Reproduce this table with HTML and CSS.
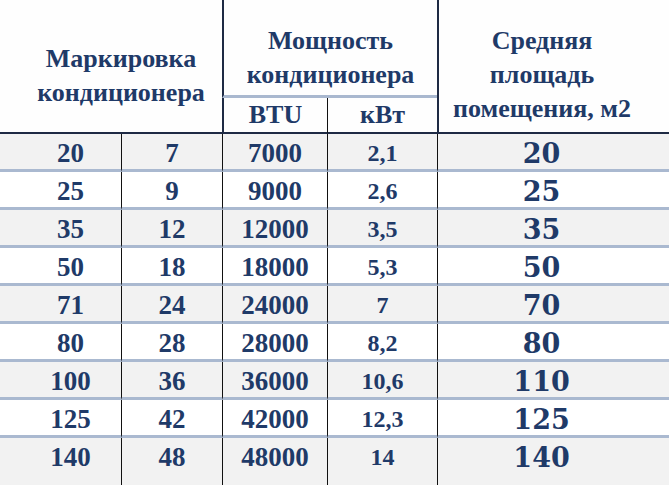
FILE: index.html
```html
<!DOCTYPE html>
<html lang="ru">
<head>
<meta charset="utf-8">
<title>Таблица кондиционеров</title>
<link rel="stylesheet" href="styles.css">
</head>
<body>
<table class="ac">
  <colgroup>
    <col class="w1"><col class="w2"><col class="w3"><col class="w4"><col class="w5">
  </colgroup>
  <thead>
    <tr class="hr1">
      <th class="h-mark" colspan="2" rowspan="2"><p class="t1">Маркировка<br>кондиционера</p></th>
      <th class="h-power" colspan="2"><span class="t2">Мощность<br>кондиционера</span></th>
      <th class="h-area" rowspan="2"><span class="t3">Средняя<br>площадь<br>помещения, м2</span></th>
    </tr>
    <tr class="hr2">
      <th class="h-btu"><span class="t4">BTU</span></th>
      <th class="h-kw"><span class="t5">кВт</span></th>
    </tr>
  </thead>
  <tbody>
    <tr class="odd"><td class="c1">20</td><td class="c2">7</td><td class="c3"><span class="sp">7000</span></td><td class="c4">2,1</td><td class="c5">20</td></tr>
    <tr><td class="c1">25</td><td class="c2">9</td><td class="c3"><span class="sp">9000</span></td><td class="c4">2,6</td><td class="c5">25</td></tr>
    <tr class="odd"><td class="c1">35</td><td class="c2">12</td><td class="c3"><span class="sp">12000</span></td><td class="c4">3,5</td><td class="c5">35</td></tr>
    <tr><td class="c1">50</td><td class="c2">18</td><td class="c3"><span class="sp">18000</span></td><td class="c4">5,3</td><td class="c5">50</td></tr>
    <tr class="odd"><td class="c1">71</td><td class="c2">24</td><td class="c3"><span class="sp">24000</span></td><td class="c4">7</td><td class="c5">70</td></tr>
    <tr><td class="c1">80</td><td class="c2">28</td><td class="c3"><span class="sp">28000</span></td><td class="c4">8,2</td><td class="c5">80</td></tr>
    <tr class="odd"><td class="c1">100</td><td class="c2">36</td><td class="c3"><span class="sp">36000</span></td><td class="c4">10,6</td><td class="c5">110</td></tr>
    <tr><td class="c1">125</td><td class="c2">42</td><td class="c3"><span class="sp">42000</span></td><td class="c4">12,3</td><td class="c5">125</td></tr>
    <tr class="odd last"><td class="c1">140</td><td class="c2">48</td><td class="c3"><span class="sp">48000</span></td><td class="c4">14</td><td class="c5">140</td></tr>
  </tbody>
</table>
</body>
</html>
```

FILE: styles.css
```css
body {
  margin: 0;
}

.ac {
  width: 669px;
  table-layout: fixed;
  border-collapse: separate;
  border-spacing: 0;
  color: #1f3a68;
}

.w1 { width: 121px; }
.w2 { width: 101px; }
.w3 { width: 105px; }
.w4 { width: 110px; }
.w5 { width: 232px; }

.ac th,
.ac td {
  text-align: center;
  padding: 0;
}

.ac th {
  font-size: 26px;
  line-height: 34px;
  background: #fefefe;
  vertical-align: bottom;
}

.t1 { margin: 0; font-family: "Liberation Serif"; font-weight: bold; font-size: 26px; }
.t2 { font: bold 26px/34px "Liberation Serif", serif; }
.t3 { font-family: "Times New Roman"; font-weight: bold; }
.t4 { font-family: serif; font-weight: bold; }
.t5 { font-family: Tinos, "Liberation Serif"; font-weight: bold; }

.hr1 { height: 98px; }
.hr2 { height: 35px; }

.ac .h-mark {
  padding-left: 20px;
  padding-bottom: 22px;
  border-bottom: 2px solid #1e2a44;
}

.ac .h-power {
  border-left: 2px solid #1e2a44;
  border-bottom: 3px solid #a9b8cf;
  padding-bottom: 3px;
}

.ac .h-area {
  border-left: 2px solid #1e2a44;
  border-bottom: 2px solid #1e2a44;
  padding-right: 24px;
  padding-bottom: 6px;
}

.ac .h-btu,
.ac .h-kw {
  vertical-align: middle;
  border-bottom: 2px solid #1e2a44;
}

.ac .h-btu {
  border-left: 2px solid #1e2a44;
}

.ac .h-kw {
  border-left: 1px solid #111111;
}

.ac tbody tr {
  height: 38px;
  background: #ffffff;
}

.ac tbody tr.odd {
  background: #f2f2f2;
}

.ac tbody tr.last {
  height: 52px;
}

.ac td {
  font-size: 27px;
  line-height: 31px;
  padding-top: 4px;
  vertical-align: top;
  border-bottom: 3px solid #aab9d0;
  font-weight: bold;
}

.ac td.c1 { font-family: "Liberation Serif"; }
.ac td.c2 { font: bold 27px/31px "Liberation Serif", serif; }
.sp { font-family: "Liberation Serif"; font-weight: bold; }
.ac td.c4 { font-family: "Times New Roman", serif; font-size: 24px; }
.ac td.c5 { font-family: "DejaVu Serif"; }

.ac tr.last td {
  border-bottom: none;
}

.ac td + td {
  border-left: 1px solid #111111;
}

.ac td.c1 {
  padding-left: 20px;
}

.ac td.c5 {
  padding-right: 24px;
}
```
